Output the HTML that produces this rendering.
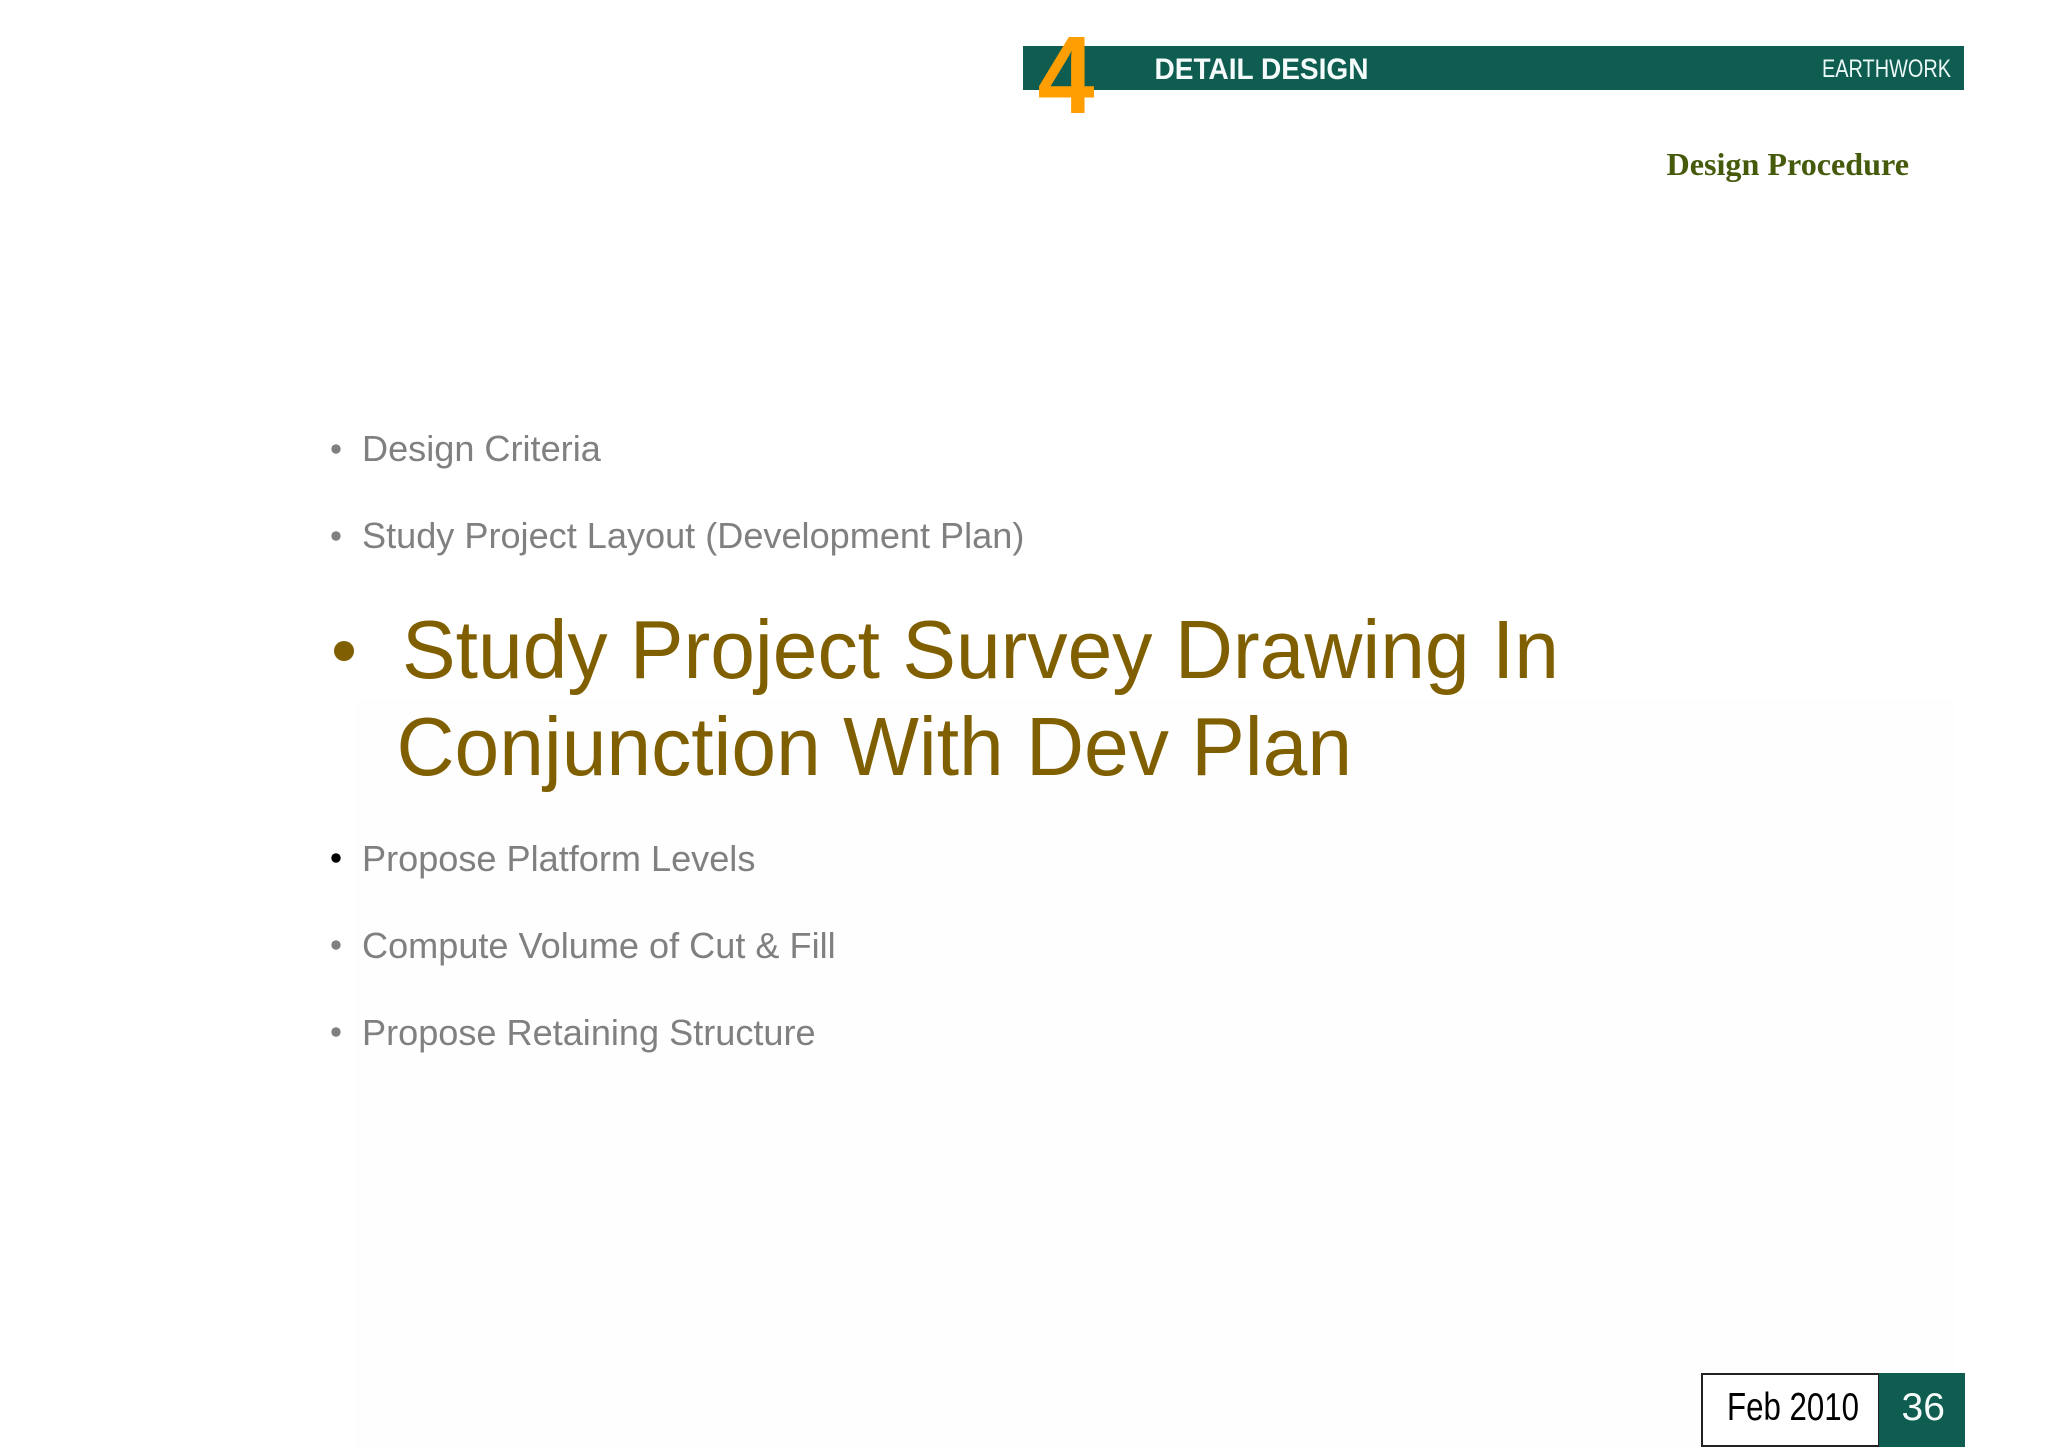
<!DOCTYPE html>
<html lang="en">
<head>
<meta charset="utf-8">
<title>Design Procedure</title>
<style>
html,body{margin:0;padding:0;background:#fff;}
body{width:2048px;height:1448px;overflow:hidden;}
svg{display:block;}
text{font-family:"Liberation Sans",Arial,sans-serif;}
.s{font-size:36.12px;fill:#808080;}
.b{font-size:83px;fill:#7f5f00;}
</style>
</head>
<body>
<svg xmlns="http://www.w3.org/2000/svg" width="2048" height="1448" viewBox="0 0 2048 1448">
<rect width="2048" height="1448" fill="#ffffff"/>
<rect x="355" y="700" width="1600" height="748" fill="#fefefe"/>
<rect x="1023" y="46" width="941" height="44" fill="#0f5c50"/>
<text x="1037.5" y="113" font-size="110" font-weight="700" fill="#ff9e02" textLength="57" lengthAdjust="spacingAndGlyphs">4</text>
<text x="1154.5" y="79" font-size="29.5" font-weight="700" fill="#f4fbfa" textLength="214" lengthAdjust="spacingAndGlyphs">DETAIL DESIGN</text>
<text x="1822" y="77" font-size="25" fill="#eaf8f6" textLength="129" lengthAdjust="spacingAndGlyphs">EARTHWORK</text>
<text x="1666.5" y="175" font-size="32" font-weight="700" fill="#465a0c" style="font-family:'Liberation Serif',serif" textLength="242.5" lengthAdjust="spacingAndGlyphs">Design Procedure</text>

<circle cx="336" cy="449" r="4.7" fill="#808080"/>
<text class="s" x="362" y="461">Design Criteria</text>
<circle cx="336" cy="536" r="4.7" fill="#808080"/>
<text class="s" x="362" y="548">Study Project Layout (Development Plan)</text>

<circle cx="344" cy="651" r="10" fill="#7f5f00"/>
<text class="b" x="402" y="678" textLength="1157" lengthAdjust="spacingAndGlyphs">Study Project Survey Drawing In</text>
<text class="b" x="396.5" y="775" textLength="955.5" lengthAdjust="spacingAndGlyphs">Conjunction With Dev Plan</text>

<circle cx="336" cy="858" r="4.7" fill="#000000"/>
<text class="s" x="362" y="871">Propose Platform Levels</text>
<circle cx="336" cy="945" r="4.7" fill="#808080"/>
<text class="s" x="362" y="958">Compute Volume of Cut &amp; Fill</text>
<circle cx="336" cy="1032" r="4.7" fill="#808080"/>
<text class="s" x="362" y="1045">Propose Retaining Structure</text>

<rect x="1702" y="1374" width="177" height="72" fill="#ffffff" stroke="#222222" stroke-width="2"/>
<rect x="1879" y="1373" width="86" height="74" fill="#0f5c50"/>
<text x="1727" y="1420" font-size="39" fill="#000000" textLength="132" lengthAdjust="spacingAndGlyphs">Feb 2010</text>
<text x="1901.5" y="1420" font-size="39" fill="#f4fbfa">36</text>
</svg>
</body>
</html>
